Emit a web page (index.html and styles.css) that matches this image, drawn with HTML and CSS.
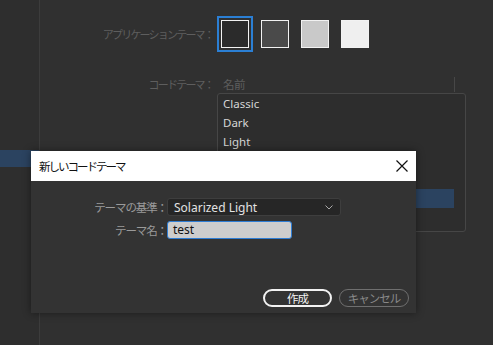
FILE: index.html
```html
<!DOCTYPE html>
<html lang="ja">
<head>
  <meta charset="UTF-8">
  <title>環境設定 - テーマ</title>
  <link rel="stylesheet" href="styles.css">
</head>
<body>
  <div class="app">
    <div class="sidebar">
      <div class="side-item selected"></div>
    </div>

    <div class="prefs">
      <div class="pref-label theme-label">アプリケーションテーマ：</div>
      <div class="swatches">
        <div class="swatch active"><span class="chip chip-darkest"></span></div>
        <div class="swatch"><span class="chip chip-dark"></span></div>
        <div class="swatch"><span class="chip chip-light"></span></div>
        <div class="swatch"><span class="chip chip-lightest"></span></div>
      </div>

      <div class="pref-label code-label">コードテーマ：</div>
      <div class="code-themes">
        <div class="list-head">
          <span>名前</span>
        </div>
        <div class="list-box">
          <div class="list-row">Classic</div>
          <div class="list-row">Dark</div>
          <div class="list-row">Light</div>
          <div class="list-row">Solarized Dark</div>
          <div class="list-row">Solarized Light</div>
          <div class="list-row selected"></div>
        </div>
      </div>
    </div>
  </div>

  <div class="dialog">
    <div class="dialog-title">
      <span>新しいコードテーマ</span>
      <svg class="close" width="12" height="12" viewBox="0 0 12 12">
        <path d="M0.5 0.5 L11.5 11.5 M11.5 0.5 L0.5 11.5" stroke="#111" stroke-width="1.2" fill="none"/>
      </svg>
    </div>
    <div class="dialog-body">
      <div class="field">
        <label>テーマの基準：</label>
        <div class="select">
          <span>Solarized Light</span>
          <svg width="8" height="5" viewBox="0 0 8 5">
            <path d="M0.5 0.5 L4 4 L7.5 0.5" stroke="#a8a8a8" stroke-width="1" fill="none"/>
          </svg>
        </div>
      </div>
      <div class="field">
        <label>テーマ名：</label>
        <div class="text-input">test</div>
      </div>
    </div>
    <div class="dialog-buttons">
      <button class="btn btn-primary">作成</button>
      <button class="btn btn-secondary">キャンセル</button>
    </div>
  </div>
</body>
</html>
```

FILE: styles.css
```css
html, body {
  margin: 0;
  height: 100%;
}
body {
  background: #303030;
  font-family: "Noto Sans", "Noto Sans CJK JP", sans-serif;
  font-size: 12px;
  overflow: hidden;
}
.app {
  display: flex;
  height: 345px;
}
.sidebar {
  width: 40px;
  border-right: 1px solid #3c3c3c;
  background: #2e2e2e;
  padding-top: 150px;
  box-sizing: border-box;
}
.side-item {
  height: 17px;
}
.side-item.selected {
  background: #2b4360;
}
.prefs {
  display: grid;
  grid-template-columns: 173px 249px;
  column-gap: 4px;
  row-gap: 24px;
  align-content: start;
  padding-top: 16px;
}
.pref-label {
  text-align: right;
  color: #5e5e5e;
  font-family: "Noto Sans CJK JP", sans-serif;
  font-size: 11px;
  letter-spacing: -1.8px;
}
.theme-label {
  align-self: center;
}
.code-label {
  line-height: 15px;
  padding-top: 1px;
}
.swatches {
  display: flex;
  gap: 4px;
}
.swatch {
  width: 36px;
  height: 36px;
  box-sizing: border-box;
  border: 2px solid transparent;
  padding: 2px;
}
.swatch.active {
  border-color: #2b7fd4;
}
.chip {
  display: block;
  width: 28px;
  height: 28px;
  box-sizing: border-box;
  border: 1px solid #f2f2f2;
}
.chip-darkest { background: #2b2b2b; }
.chip-dark { background: #4a4a4a; }
.chip-light { background: #c9c9c9; }
.chip-lightest { background: #efefef; }

.code-themes {
  width: 249px;
}
.list-head {
  height: 17px;
  display: flex;
  align-items: center;
  padding-left: 6px;
  color: #5e5e5e;
  font-family: "Noto Sans CJK JP", sans-serif;
  font-size: 11.5px;
  letter-spacing: -0.5px;
}
.list-head span {
  width: 231px;
  border-right: 1px solid #474747;
  line-height: 15px;
}
.list-box {
  height: 139px;
  box-sizing: border-box;
  border: 1px solid #464646;
  border-radius: 3px;
  background: #2d2d2d;
  padding-right: 11px;
  overflow: hidden;
}
.list-row {
  height: 19px;
  line-height: 19px;
  padding-left: 5px;
  color: #d6d6d6;
  font-size: 11.5px;
}
.list-row.selected {
  background: #2b4360;
}

.dialog {
  position: absolute;
  left: 31px;
  top: 151px;
  width: 385px;
  height: 162px;
  background: #333333;
  box-shadow: 0 0 8px rgba(0, 0, 0, 0.45);
  display: flex;
  flex-direction: column;
}
.dialog-title {
  height: 30px;
  background: #ffffff;
  display: flex;
  align-items: center;
  justify-content: space-between;
  padding: 0 8px 0 8px;
  color: #111;
  font-family: "Noto Sans CJK JP", sans-serif;
  font-size: 11.5px;
  letter-spacing: -2px;
}
.dialog-body {
  flex: 1;
  padding-top: 17px;
  display: flex;
  flex-direction: column;
  gap: 5px;
}
.field {
  display: flex;
  align-items: center;
}
.field label {
  width: 136px;
  text-align: right;
  color: #9a9a9a;
  font-family: "Noto Sans CJK JP", sans-serif;
  font-size: 11.5px;
  letter-spacing: -1.1px;
}
.select {
  width: 174px;
  height: 18px;
  box-sizing: border-box;
  border: 1px solid #3e3e3e;
  border-radius: 3px;
  background: #262626;
  display: flex;
  align-items: center;
  justify-content: space-between;
  padding: 0 7px 0 6px;
  color: #e2e2e2;
  font-size: 12px;
}
.text-input {
  width: 125px;
  height: 18px;
  box-sizing: border-box;
  border: 1px solid #2e7dd4;
  border-radius: 3px;
  background: #cdcdcd;
  padding-left: 5px;
  line-height: 16px;
  color: #111;
  font-size: 12px;
}
.dialog-buttons {
  display: flex;
  justify-content: flex-end;
  gap: 7px;
  padding: 0 7px 6px 0;
}
.btn {
  height: 18px;
  border-radius: 9px;
  background: transparent;
  font-family: "Noto Sans CJK JP", sans-serif;
  font-size: 11.5px;
  letter-spacing: -1px;
  padding: 0;
  line-height: 14px;
  box-sizing: border-box;
}
.btn-primary {
  width: 69px;
  border: 2px solid #f2f2f2;
  color: #f2f2f2;
}
.btn-secondary {
  width: 70px;
  border: 1px solid #6f6f6f;
  color: #8a8a8a;
}
```
